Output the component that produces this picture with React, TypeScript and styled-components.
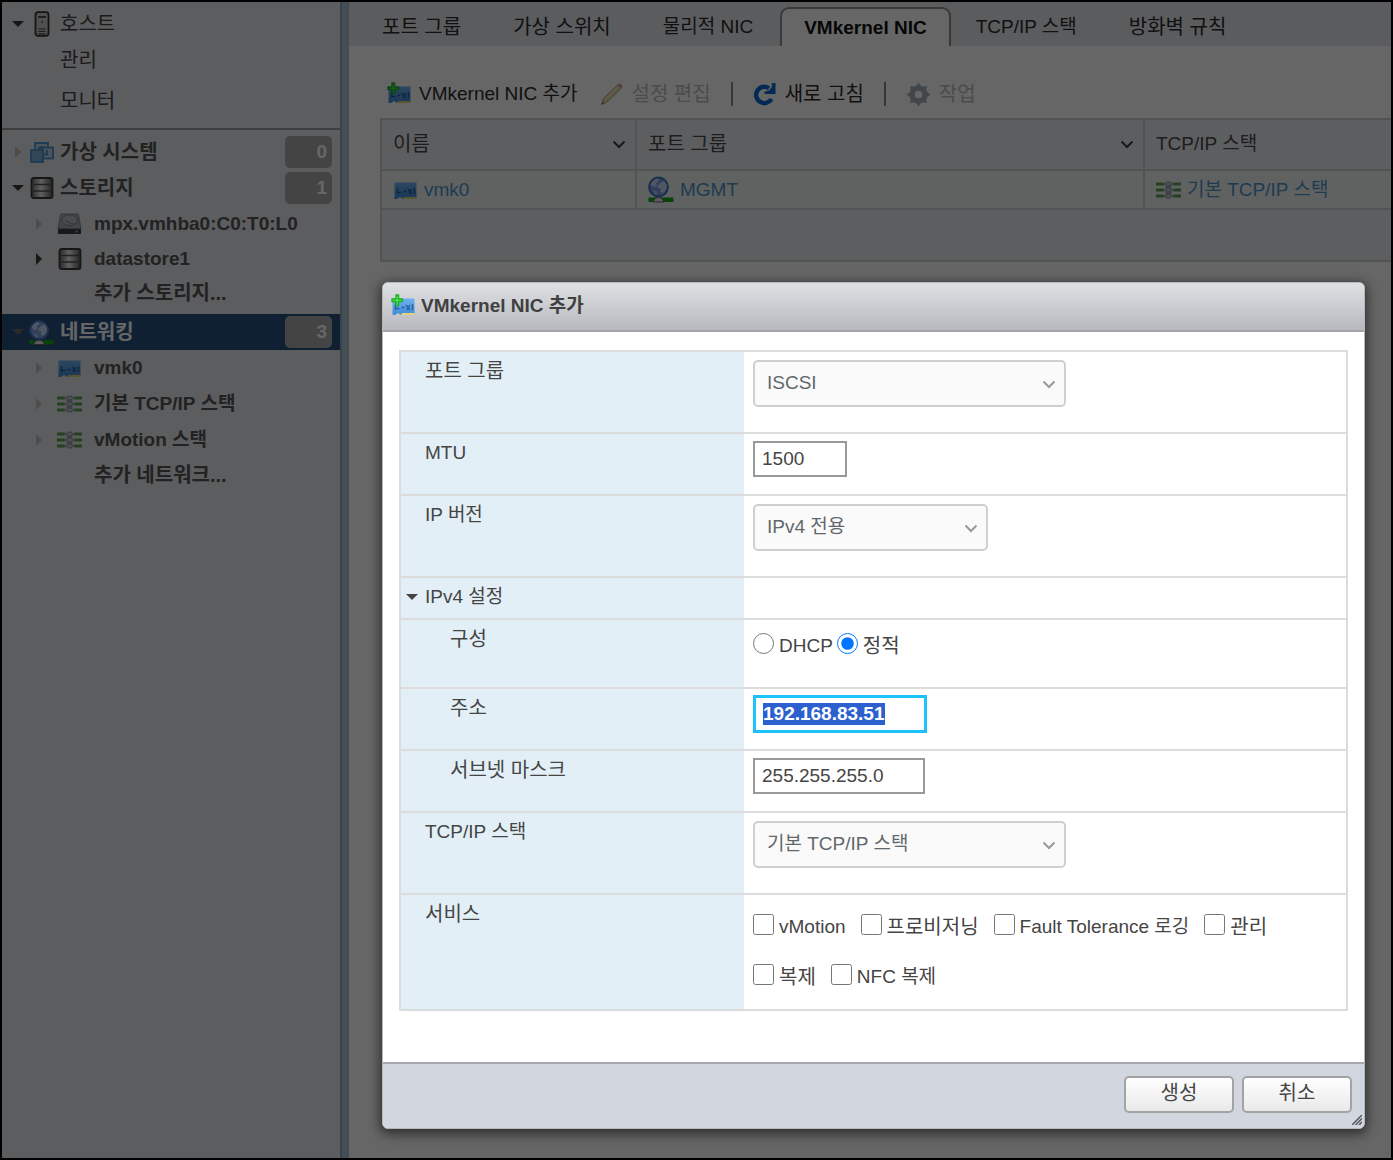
import React, { useEffect, useRef, useState } from "react";
import styled, { createGlobalStyle, css } from "styled-components";

const GlobalStyle = createGlobalStyle`
  *, *::before, *::after { box-sizing: border-box; }
  body { margin: 0; background: #000; }
  body, button, input, select {
    font-family: "Liberation Sans", Arial, "Noto Sans CJK KR", sans-serif;
    font-size: 19px;
    line-height: 26px;
  }
`;

/* ---------- page ---------- */

const Page = styled.div`
  position: relative;
  display: flex;
  min-height: 100vh;
  border: 2px solid #000;
  background: #fff;
  overflow: hidden;
`;

const Sidebar = styled.aside`
  flex: 0 0 338px;
  background: #e6e8eb;
  color: #555;
`;

const HostSection = styled.nav`
  padding: 4px 0;
  border-bottom: 2px solid #9c9c9c;
  color: #444;
`;

const TreeSection = styled.nav`
  padding-top: 4px;
`;

const Splitter = styled.div`
  flex: 0 0 9px;
  background: #a0c8e4;
  border-left: 2px solid #a0a4aa;
  border-right: 2px solid #b4b8bc;
`;

const TreeRow = styled.div<{ $level?: number; $selected?: boolean; $short?: boolean }>`
  display: flex;
  align-items: center;
  height: ${(p) => (p.$short ? 34 : 36)}px;
  padding: 0 8px 0 ${(p) => (p.$level === 2 ? 29 : 8)}px;
  gap: ${(p) => (p.$level === 2 ? 10 : 3)}px;
  ${(p) =>
    p.$selected &&
    css`
      margin-top: 4px;
      background: #285280;
      color: #fff;
    `}
`;

const Toggle = styled.button<{ $tone?: string }>`
  display: flex;
  align-items: center;
  justify-content: center;
  flex: none;
  width: 16px;
  height: 20px;
  padding: 0;
  border: 0;
  background: none;
  color: ${(p) => p.$tone ?? "#3a3a3a"};
`;

const IconSlot = styled.span`
  display: flex;
  align-items: center;
  justify-content: center;
  flex: none;
  width: 25px;
`;

const TreeLink = styled.a<{ $ko?: boolean; $level?: number; $plain?: boolean }>`
  flex: 1;
  padding-left: ${(p) => (p.$level === 2 ? 2 : 3)}px;
  color: inherit;
  text-decoration: none;
  white-space: nowrap;
  font-size: ${(p) => (p.$ko ? 20 : 19)}px;
  font-weight: ${(p) => (p.$plain ? 400 : 700)};
`;

const SubLink = styled.a<{ $tall?: boolean; $deep?: boolean; $plain?: boolean }>`
  display: flex;
  align-items: center;
  height: ${(p) => (p.$tall ? 46 : p.$deep ? 34 : 36)}px;
  padding-left: ${(p) => (p.$deep ? 92 : 58)}px;
  color: inherit;
  text-decoration: none;
  font-size: 20px;
  font-weight: ${(p) => (p.$plain ? 400 : 700)};
`;

const Count = styled.span`
  width: 47px;
  height: 32px;
  padding: 3px 5px 0 0;
  border-radius: 5px;
  background: #aaa;
  color: #fff;
  font-weight: 700;
  text-align: right;
`;

/* ---------- main ---------- */

const Main = styled.main`
  flex: 1;
  min-width: 0;
`;

const TabBar = styled.div`
  display: flex;
  align-items: flex-end;
  height: 44px;
  padding: 5px 7px 0;
  background: #e1e5ea;
`;

const Tab = styled.button<{ $active?: boolean; $ko?: boolean }>`
  height: 39px;
  padding: 0 26px;
  border: 0;
  background: none;
  color: #2b2b2b;
  font-size: ${(p) => (p.$ko ? 20 : 19)}px;
  white-space: nowrap;
  ${(p) =>
    p.$active &&
    css`
      margin: 0 -1px 0 1px;
      padding: 0 22px;
      border: 2px solid #909090;
      border-bottom: 0;
      border-radius: 9px 9px 0 0;
      background: #fff;
      color: #111;
      font-weight: 700;
    `}
`;

const Toolbar = styled.div`
  display: flex;
  align-items: center;
  height: 72px;
  padding: 24px 0 0 38px;
`;

const ToolButton = styled.button<{ $ko?: boolean }>`
  display: flex;
  align-items: center;
  gap: ${(p) => (p.$ko ? 8 : 7)}px;
  padding: 0;
  border: 0;
  background: none;
  color: #2b2b2b;
  font-size: ${(p) => (p.$ko ? 20 : 19)}px;
  white-space: nowrap;
  & + & {
    margin-left: 22px;
  }
  &:disabled {
    color: #bbb;
  }
`;

const ToolDivider = styled.span`
  width: 2px;
  height: 24px;
  margin: 0 20px;
  background: #888;
`;

const Table = styled.table`
  width: calc(100% - 31px);
  margin-left: 31px;
  table-layout: fixed;
  border-collapse: collapse;
  border: 2px solid #ced2d2;
  border-right: 0;
  background: #e9ecef;
`;

const HeadCell = styled.th<{ $w?: number }>`
  width: ${(p) => (p.$w ? `${p.$w}px` : "auto")};
  height: 51px;
  padding: 0 9px 2px 11px;
  border: 2px solid #ced2d2;
  border-right: 0;
  color: #4a4a4a;
  font-weight: 400;
  text-align: left;
`;

const HeadInner = styled.span<{ $ko?: boolean }>`
  display: flex;
  align-items: center;
  justify-content: space-between;
  font-size: ${(p) => (p.$ko ? 20 : 19)}px;
`;

const Cell = styled.td`
  height: 39px;
  padding: 0 11px;
  border: 2px solid #ced2d2;
  border-right: 0;
  background: #f1f4f6;
`;

const FillerCell = styled.td`
  height: 52px;
  border-top: 2px solid #ced2d2;
`;

const CellLink = styled.a`
  display: flex;
  align-items: center;
  gap: 6px;
  color: #4f94c6;
  text-decoration: none;
`;

/* ---------- dialog ---------- */

const Backdrop = styled.div`
  position: absolute;
  inset: 0;
  padding: 280px 26px 30px 380px;
  background: rgba(0, 0, 0, 0.6);
`;

const Dialog = styled.section`
  border: 1px solid #b5b7bc;
  border-radius: 6px;
  background: #fff;
  color: #454545;
  overflow: hidden;
  box-shadow: 0 3px 12px 2px rgba(0, 0, 0, 0.55);
`;

const DialogHead = styled.header`
  display: flex;
  align-items: center;
  gap: 5px;
  height: 49px;
  padding: 0 8px 2px;
  border-bottom: 2px solid #a3a4a8;
  background: linear-gradient(#dfe0e4, #b8b9be);
`;

const DialogTitle = styled.h1`
  margin: 0;
  font-size: 19px;
  line-height: 26px;
  font-weight: 700;
  color: #404040;
`;

const DialogBody = styled.div`
  padding: 18px 16px 51px;
`;

const Form = styled.form`
  border: 2px solid #dcdcdc;
  border-top: 0;
`;

const Row = styled.div<{ $h: number }>`
  display: grid;
  grid-template-columns: 343px 1fr;
  min-height: ${(p) => p.$h}px;
  border-top: 2px solid #dcdcdc;
`;

const LabelCell = styled.div<{ $indent?: boolean; $ko?: boolean }>`
  padding: 6px 0 0 ${(p) => (p.$indent ? 49 : 24)}px;
  background: #e3eff6;
  color: #454545;
  font-size: ${(p) => (p.$ko ? 20 : 19)}px;
`;

const Expander = styled.button`
  display: flex;
  align-items: center;
  gap: 7px;
  margin-left: -19px;
  padding: 0;
  border: 0;
  background: none;
  color: inherit;
`;

const ValueCell = styled.div<{ $top?: number }>`
  padding: ${(p) => p.$top ?? 8}px 9px 0;
`;

const SelectBox = styled.span<{ $w: number }>`
  position: relative;
  display: block;
  width: ${(p) => p.$w}px;
  svg {
    position: absolute;
    right: 10px;
    top: 17px;
    pointer-events: none;
  }
`;

const Select = styled.select`
  appearance: none;
  display: block;
  width: 100%;
  height: 47px;
  padding: 0 36px 2px 12px;
  border: 2px solid #cfcfcf;
  border-radius: 5px;
  background: #fafafa;
  color: #61686b;
`;

const TextInput = styled.input<{ $w: number }>`
  display: block;
  width: ${(p) => p.$w}px;
  height: 36px;
  padding: 0 7px 1px;
  border: 2px solid #999;
  border-radius: 0;
  background: #fff;
  color: #454545;
  line-height: 22px;
  outline: 0;
`;

const AddressInput = styled(TextInput)`
  height: 38px;
  border: 3px solid #1cc3fb;
  font-weight: 700;
  &::selection {
    background: rgba(43, 95, 206, 0.996);
    color: #fff;
  }
`;

const Choices = styled.div<{ $gap: number }>`
  display: flex;
  flex-wrap: wrap;
  gap: 24px ${(p) => p.$gap}px;
`;

const Choice = styled.label<{ $ko?: boolean }>`
  display: flex;
  align-items: center;
  gap: 5px;
  white-space: nowrap;
  font-size: ${(p) => (p.$ko ? 20 : 19)}px;
  input {
    width: 21px;
    height: 21px;
    margin: 0 0 5px;
  }
`;

const DialogFoot = styled.footer`
  position: relative;
  display: flex;
  justify-content: flex-end;
  gap: 8px;
  height: 66px;
  padding: 12px 12px 0;
  border-top: 2px solid #a5a8ad;
  background: #d1d6df;
`;

const PushButton = styled.button`
  width: 110px;
  height: 37px;
  padding: 0 0 3px;
  border: 2px solid #a3a3a3;
  border-radius: 5px;
  background: linear-gradient(#fff, #e9e9e9);
  color: #454545;
  font-size: 20px;
`;

const Grip = styled.span`
  position: absolute;
  right: 2px;
  bottom: 3px;
  display: flex;
`;

/* ---------- icons ---------- */

const CaretDown = () => (
  <svg width="12" height="8" viewBox="0 0 12 8" fill="currentColor"><path d="M0 1h12L6 7z" /></svg>
);
const CaretRight = () => (
  <svg width="8" height="12" viewBox="0 0 8 12" fill="currentColor"><path d="M1 0l6 6-6 6z" /></svg>
);
const Chevron = ({ color = "#3d3d3d" }: { color?: string }) => (
  <svg width="14" height="14" viewBox="0 0 14 14" fill="none" stroke={color} strokeWidth="2"><path d="M1.500 4.500L7 10l5.500-5.500" /></svg>
);

const HostIcon = () => (
  <svg width="16" height="26" viewBox="0 0 16 26">
    <rect x="1.500" y="1.200" width="13" height="23.600" rx="2.500" fill="#c9c9c9" stroke="#333" strokeWidth="1.800" />
    <path d="M4 6h8" stroke="#333" strokeWidth="1.600" />
    <circle cx="8" cy="11" r="1" fill="#555" />
    <path d="M4.500 18h7M4.500 20.500h7M4.500 22.800h7" stroke="#444" strokeWidth="1.200" />
  </svg>
);

const VmIcon = () => (
  <svg width="24" height="22" viewBox="0 0 24 22" stroke="#4a94cc" strokeWidth="1.800">
    <path d="M5 9V2h13v5" fill="#c3d8e8" />
    <rect x="11" y="6.500" width="12" height="11" fill="#bcd3e5" />
    <rect x="1" y="9" width="12" height="12" fill="#7fb0d6" />
    <path d="M9 9V6.500h5M13 13.500h4V9" fill="none" />
  </svg>
);

const StoreIcon = () => (
  <svg width="24" height="22" viewBox="0 0 24 22">
    <defs>
      <linearGradient id="metal" x1="0" x2="1">
        <stop offset="0" stopColor="#6a6a6a" /><stop offset="0.450" stopColor="#efefef" /><stop offset="1" stopColor="#5a5a5a" />
      </linearGradient>
    </defs>
    <rect x="1.500" y="1" width="21" height="20" rx="2" fill="url(#metal)" stroke="#3a3a3a" strokeWidth="1.800" />
    <path d="M3 7.500h18M3 14h18" fill="none" stroke="#555" strokeWidth="1.400" />
  </svg>
);

const DiskIcon = () => (
  <svg width="26" height="24" viewBox="0 0 26 24">
    <path d="M5 1.500h16q1 0 1.500 1.500L25 17H1L3.500 3Q4 1.500 5 1.500z" fill="#a5adb2" stroke="#858e93" strokeWidth="1" />
    <ellipse cx="13" cy="8" rx="8" ry="5.500" fill="#b8c0c5" stroke="#7c868c" />
    <path d="M9 8q3 4 10 4" fill="none" stroke="#858e93" strokeWidth="1.200" />
    <rect x="1" y="17" width="24" height="5.500" rx="1" fill="#38424a" />
    <circle cx="20.500" cy="19.800" r="1" fill="#a8d080" />
  </svg>
);

const GlobeIcon = () => (
  <svg width="26" height="27" viewBox="0 0 26 27">
    <circle cx="10.500" cy="11" r="9.500" fill="#7d9ce0" stroke="#3c76c4" strokeWidth="1.800" />
    <path d="M3 8q2-5 7-5.500l1 2.500-3 2 1 2-2 2-3-1z" fill="#c9d8f6" />
    <path d="M12 7l4-2 3 4-1 5-3 3-3-1 1-3-4-2z" fill="#c9d8f6" />
    <path d="M5 14l3 1 2 3-3 1z" fill="#b4c8f0" />
    <rect x="0.500" y="21.500" width="25" height="4.500" fill="#14a814" />
    <path d="M5 26q1-4.500 5.500-4.500T16 26z" fill="#e8e4e8" stroke="#775a70" />
  </svg>
);

const NicIcon = ({ plus = false }: { plus?: boolean }) => (
  <svg width="25" height="24" viewBox="0 0 25 24">
    <defs>
      <linearGradient id="board" x1="0" y1="0" x2="0" y2="1">
        <stop offset="0" stopColor="#6fb2ee" /><stop offset="1" stopColor="#3f8bd6" />
      </linearGradient>
    </defs>
    <path d="M1.500 4.500h22V20H12l-2 1-3-2-3 2H1.500z" fill="url(#board)" />
    <path d="M11 19h12.500v2H10z" fill="#e3d37c" />
    <path d="M4.500 10v6M4.500 14.500h4M10.500 13.500h3M15 11l4 5M19 11l-3 5M21.500 10v6" fill="none" stroke="#2560a4" strokeWidth="1.400" />
    {plus && (
      <path d="M5 1h2.500v4h4v2.500h-4v4H5v-4H1V5h4z" fill="#4bf04b" stroke="#1fae28" strokeWidth="1.400" strokeLinejoin="round" />
    )}
  </svg>
);

const StackIcon = () => (
  <svg width="25" height="18" viewBox="0 0 25 18">
    <path d="M0 3h8M17 3h8M0 9h8M17 9h8M0 15h8M17 15h8" stroke="#5aa04e" strokeWidth="3" />
    <path d="M7 3h11M7 9h11M7 15h11" stroke="#9aa4ac" strokeWidth="2" />
    <rect x="9.500" y="0.500" width="6" height="17" rx="1.500" fill="#9aa4ae" />
    <path d="M10.500 3h4M10.500 9h4M10.500 15h4" stroke="#c8ced4" strokeWidth="2" />
  </svg>
);

const PencilIcon = () => (
  <svg width="24" height="24" viewBox="0 0 24 24">
    <path d="M1.500 22.500l2-6L18 2.500l3.500 3.500L7 20z" fill="#e3d3a0" stroke="#b5a987" strokeWidth="1" />
    <path d="M17 3.500l2-2q3 0 3.500 3.500l-2 2z" fill="#cfa9a9" />
    <path d="M5 18L18.500 4.500" stroke="#f3eac6" strokeWidth="1.400" />
    <path d="M1.500 22.500l1-3 2 2z" fill="#888" />
  </svg>
);

const RefreshIcon = () => (
  <svg width="24" height="24" viewBox="0 0 24 24">
    <path d="M18.500 17A8.200 8.200 0 1 1 16 6.200" fill="none" stroke="#0a66cc" strokeWidth="4.400" />
    <path d="M22.500 1v11H11.500V9.800l5-1.500 2.300-3V1z" fill="#0a66cc" />
  </svg>
);

const GearIcon = () => (
  <svg width="25" height="25" viewBox="0 0 26 26">
    <g fill="#a4afbc">
      {[0, 45, 90, 135].map((a) => (
        <path key={a} d="M10 5L13 0.500 16 5v16l-3 4.500L10 21z" transform={`rotate(${a} 13 13)`} />
      ))}
      <circle cx="13" cy="13" r="9.500" />
    </g>
    <circle cx="13" cy="13" r="4" fill="#fff" />
  </svg>
);

/* ---------- view ---------- */

type NodeProps = {
  label: string;
  icon: React.ReactNode;
  level?: number;
  open?: boolean;
  tone?: string;
  ko?: boolean;
  plain?: boolean;
  selected?: boolean;
  short?: boolean;
  count?: number;
};

const TreeNode = ({ label, icon, level = 1, open, tone, ko, plain, selected, short, count }: NodeProps) => (
  <TreeRow $level={level} $selected={selected} $short={short}>
    <Toggle $tone={tone} aria-label={label} aria-expanded={!!open}>{open ? <CaretDown /> : <CaretRight />}</Toggle>
    <IconSlot>{icon}</IconSlot>
    <TreeLink href="#" $ko={ko} $level={level} $plain={plain}>{label}</TreeLink>
    {count !== undefined && <Count>{count}</Count>}
  </TreeRow>
);

const faint = "#bdbdbd";

const services = [
  { id: "vmotion", label: "vMotion" },
  { id: "provisioning", label: "프로비저닝", ko: true },
  { id: "ft", label: "Fault Tolerance 로깅" },
  { id: "management", label: "관리", ko: true },
  { id: "replication", label: "복제", ko: true },
  { id: "nfc", label: "NFC 복제" },
];

export default function App() {
  const address = useRef<HTMLInputElement>(null);
  const [mode, setMode] = useState("static");

  useEffect(() => {
    address.current?.focus();
    address.current?.select();
  }, []);

  return (
    <>
      <GlobalStyle />
      <Page>
        <Sidebar>
          <HostSection>
            <TreeNode label="호스트" icon={<HostIcon />} open ko plain />
            <SubLink href="#" $plain>관리</SubLink>
            <SubLink href="#" $plain $tall>모니터</SubLink>
          </HostSection>
          <TreeSection>
            <TreeNode label="가상 시스템" icon={<VmIcon />} tone={faint} ko count={0} />
            <TreeNode label="스토리지" icon={<StoreIcon />} open ko count={1} />
            <TreeNode label="mpx.vmhba0:C0:T0:L0" icon={<DiskIcon />} level={2} tone={faint} />
            <TreeNode label="datastore1" icon={<StoreIcon />} level={2} short />
            <SubLink href="#" $deep>추가 스토리지...</SubLink>
            <TreeNode label="네트워킹" icon={<GlobeIcon />} open tone="#6d6d6d" ko selected count={3} />
            <TreeNode label="vmk0" icon={<NicIcon />} level={2} tone={faint} />
            <TreeNode label="기본 TCP/IP 스택" icon={<StackIcon />} level={2} tone={faint} />
            <TreeNode label="vMotion 스택" icon={<StackIcon />} level={2} tone={faint} />
            <SubLink href="#" $deep>추가 네트워크...</SubLink>
          </TreeSection>
        </Sidebar>
        <Splitter />
        <Main>
          <TabBar>
            <Tab $ko>포트 그룹</Tab>
            <Tab $ko>가상 스위치</Tab>
            <Tab>물리적 NIC</Tab>
            <Tab $active>VMkernel NIC</Tab>
            <Tab>TCP/IP 스택</Tab>
            <Tab $ko>방화벽 규칙</Tab>
          </TabBar>
          <Toolbar>
            <ToolButton><NicIcon plus />VMkernel NIC 추가</ToolButton>
            <ToolButton $ko disabled><PencilIcon />설정 편집</ToolButton>
            <ToolDivider />
            <ToolButton $ko><RefreshIcon />새로 고침</ToolButton>
            <ToolDivider />
            <ToolButton $ko disabled><GearIcon />작업</ToolButton>
          </Toolbar>
          <Table>
            <thead>
              <tr>
                <HeadCell $w={255}><HeadInner $ko>이름<Chevron /></HeadInner></HeadCell>
                <HeadCell $w={508}><HeadInner $ko>포트 그룹<Chevron /></HeadInner></HeadCell>
                <HeadCell><HeadInner>TCP/IP 스택</HeadInner></HeadCell>
              </tr>
            </thead>
            <tbody>
              <tr>
                <Cell><CellLink href="#"><NicIcon />vmk0</CellLink></Cell>
                <Cell><CellLink href="#"><GlobeIcon />MGMT</CellLink></Cell>
                <Cell><CellLink href="#"><StackIcon />기본 TCP/IP 스택</CellLink></Cell>
              </tr>
              <tr><FillerCell colSpan={3} /></tr>
            </tbody>
          </Table>
        </Main>

        <Backdrop>
          <Dialog role="dialog" aria-labelledby="dialog-title">
            <DialogHead>
              <NicIcon plus />
              <DialogTitle id="dialog-title">VMkernel NIC 추가</DialogTitle>
            </DialogHead>
            <DialogBody>
              <Form id="nic-form" onSubmit={(e) => e.preventDefault()}>
                <Row $h={82}>
                  <LabelCell $ko><label htmlFor="portgroup">포트 그룹</label></LabelCell>
                  <ValueCell>
                    <SelectBox $w={313}>
                      <Select id="portgroup"><option>ISCSI</option></Select>
                      <Chevron color="#999" />
                    </SelectBox>
                  </ValueCell>
                </Row>
                <Row $h={62}>
                  <LabelCell><label htmlFor="mtu">MTU</label></LabelCell>
                  <ValueCell $top={7}><TextInput id="mtu" $w={94} defaultValue="1500" /></ValueCell>
                </Row>
                <Row $h={82}>
                  <LabelCell><label htmlFor="ipver">IP 버전</label></LabelCell>
                  <ValueCell>
                    <SelectBox $w={235}>
                      <Select id="ipver"><option>IPv4 전용</option></Select>
                      <Chevron color="#999" />
                    </SelectBox>
                  </ValueCell>
                </Row>
                <Row $h={42}>
                  <LabelCell><Expander type="button" aria-expanded><CaretDown />IPv4 설정</Expander></LabelCell>
                  <ValueCell />
                </Row>
                <Row $h={69}>
                  <LabelCell $indent $ko>구성</LabelCell>
                  <ValueCell $top={13}>
                    <Choices $gap={4}>
                      <Choice>
                        <input type="radio" name="mode" checked={mode === "dhcp"} onChange={() => setMode("dhcp")} />DHCP
                      </Choice>
                      <Choice $ko>
                        <input type="radio" name="mode" checked={mode === "static"} onChange={() => setMode("static")} />정적
                      </Choice>
                    </Choices>
                  </ValueCell>
                </Row>
                <Row $h={62}>
                  <LabelCell $indent $ko><label htmlFor="address">주소</label></LabelCell>
                  <ValueCell $top={6}><AddressInput id="address" ref={address} $w={174} defaultValue="192.168.83.51" /></ValueCell>
                </Row>
                <Row $h={62}>
                  <LabelCell $indent $ko><label htmlFor="mask">서브넷 마스크</label></LabelCell>
                  <ValueCell $top={7}><TextInput id="mask" $w={172} defaultValue="255.255.255.0" /></ValueCell>
                </Row>
                <Row $h={82}>
                  <LabelCell><label htmlFor="stack">TCP/IP 스택</label></LabelCell>
                  <ValueCell>
                    <SelectBox $w={313}>
                      <Select id="stack"><option>기본 TCP/IP 스택</option></Select>
                      <Chevron color="#999" />
                    </SelectBox>
                  </ValueCell>
                </Row>
                <Row $h={116}>
                  <LabelCell $ko>서비스</LabelCell>
                  <ValueCell $top={19}>
                    <Choices $gap={15}>
                      {services.map((s) => (
                        <Choice key={s.id} $ko={s.ko}><input type="checkbox" name={s.id} />{s.label}</Choice>
                      ))}
                    </Choices>
                  </ValueCell>
                </Row>
              </Form>
            </DialogBody>
            <DialogFoot>
              <PushButton type="submit" form="nic-form">생성</PushButton>
              <PushButton type="button">취소</PushButton>
              <Grip>
                <svg width="10" height="10" viewBox="0 0 10 10" stroke="#555" strokeWidth="1.500"><path d="M0 10L10 0M3.500 10L10 3.500M7 10l3-3" /></svg>
              </Grip>
            </DialogFoot>
          </Dialog>
        </Backdrop>
      </Page>
    </>
  );
}
